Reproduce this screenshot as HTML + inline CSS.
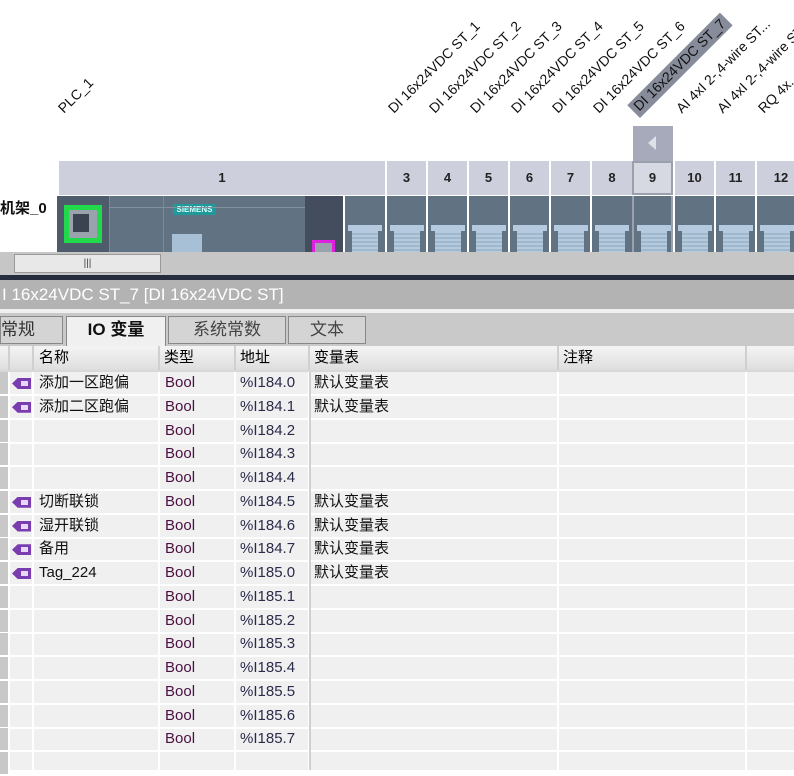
<!DOCTYPE html>
<html><head><meta charset="utf-8"><style>
*{margin:0;padding:0;box-sizing:border-box}
body{width:794px;height:770px;overflow:hidden;background:#fff;font-family:"Liberation Sans","Noto Sans CJK SC",sans-serif;position:relative}
.a{position:absolute}
.lbl{position:absolute;font-size:14px;color:#111;transform-origin:0 100%;transform:rotate(-45deg);white-space:nowrap;line-height:16px}
.hd{position:absolute;top:161px;height:34px;background:#cdd0dc;border-left:2px solid #fff;font-size:13px;font-weight:bold;text-align:center;line-height:34px;color:#222}
.mod{position:absolute;top:196px;height:56px;background:#617282;border-left:2px solid #fff}
.conn{position:absolute;left:7px;width:26px;top:33px;height:23px;background:repeating-linear-gradient(#9fb8cc 0 2px,#b5cade 2px 4px)}
.conn:before{content:"";position:absolute;left:-4px;top:-4px;width:34px;height:6px;background:#b5cade}
.row{position:absolute;left:0;width:794px;height:24px;font-size:15px;line-height:22px}
.c{position:absolute;top:0;height:100%;border-right:2px solid #fff}
.tag{position:absolute;left:2px;top:6px;width:19px;height:11px;background:#7a3db0;clip-path:polygon(0 50%,30% 0,100% 0,100% 100%,30% 100%);}
.tag:after{content:"";position:absolute;left:9px;top:3px;width:7px;height:5px;background:#e8d8f8}
</style></head><body>
<div class="lbl" style="left:66px;top:100px">PLC_1</div>
<div class="lbl" style="left:396px;top:100px">DI 16x24VDC ST_1</div>
<div class="lbl" style="left:437px;top:100px">DI 16x24VDC ST_2</div>
<div class="lbl" style="left:478px;top:100px">DI 16x24VDC ST_3</div>
<div class="lbl" style="left:519px;top:100px">DI 16x24VDC ST_4</div>
<div class="lbl" style="left:560px;top:100px">DI 16x24VDC ST_5</div>
<div class="lbl" style="left:601px;top:100px">DI 16x24VDC ST_6</div>
<div class="lbl" style="left:640px;top:100px;background:#878c9a;padding:0 4px;height:18px">DI 16x24VDC ST_7</div>
<div class="lbl" style="left:684px;top:100px">AI 4xI 2-,4-wire ST...</div>
<div class="lbl" style="left:725px;top:100px">AI 4xI 2-,4-wire ST...</div>
<div class="lbl" style="left:766px;top:100px">RQ 4x...</div>
<div class="a" style="left:633px;top:126px;width:40px;height:35px;background:#a6aabb"></div>
<div class="a" style="left:648px;top:136px;width:0;height:0;border-top:7px solid transparent;border-bottom:7px solid transparent;border-right:8px solid #dfe1e8"></div>
<div class="a" style="left:0;top:197px;font-size:15px;font-weight:bold;color:#111">机架_0</div>
<div class="hd" style="left:57px;width:328px">1</div>
<div class="hd" style="left:385px;width:41px">3</div>
<div class="hd" style="left:426px;width:41px">4</div>
<div class="hd" style="left:467px;width:41px">5</div>
<div class="hd" style="left:508px;width:41px">6</div>
<div class="hd" style="left:549px;width:41px">7</div>
<div class="hd" style="left:590px;width:42px">8</div>
<div class="hd" style="left:632px;width:41px;border:2px solid #9aa0ae;background:#d6d8e2;line-height:30px">9</div>
<div class="hd" style="left:673px;width:41px">10</div>
<div class="hd" style="left:714px;width:41px">11</div>
<div class="hd" style="left:755px;width:50px">12</div>
<div class="a" style="left:57px;top:196px;width:52px;height:56px;background:#4e5b6b"></div>
<div class="a" style="left:64px;top:205px;width:38px;height:38px;background:#21d94a"></div>
<div class="a" style="left:69px;top:210px;width:28px;height:28px;background:#9aa2ae"></div>
<div class="a" style="left:73px;top:214px;width:16px;height:18px;background:#3b4250"></div>
<div class="mod" style="left:109px;width:54px;border-left:1px solid #7a8898"></div>
<div class="mod" style="left:163px;width:142px;border-left:1px solid #7a8898"><div class="a" style="left:9px;top:8px;width:43px;height:11px;background:#1e9a9a;color:#dff;font-size:8px;font-weight:bold;line-height:11px;text-align:center">SIEMENS</div><div class="a" style="left:8px;top:38px;width:30px;height:18px;background:#a8c0d6"></div></div>
<div class="a" style="left:109px;top:207px;width:196px;height:1px;background:#8190a0"></div>
<div class="a" style="left:305px;top:196px;width:38px;height:56px;background:#434d5d"></div>
<div class="a" style="left:312px;top:240px;width:23px;height:12px;background:#e020e0"></div>
<div class="a" style="left:315px;top:243px;width:17px;height:9px;background:#9aa2ae"></div>
<div class="mod" style="left:343px;width:42px"><div class="conn"></div></div>
<div class="mod" style="left:385px;width:41px"><div class="conn"></div></div>
<div class="mod" style="left:426px;width:41px"><div class="conn"></div></div>
<div class="mod" style="left:467px;width:41px"><div class="conn"></div></div>
<div class="mod" style="left:508px;width:41px"><div class="conn"></div></div>
<div class="mod" style="left:549px;width:41px"><div class="conn"></div></div>
<div class="mod" style="left:590px;width:42px"><div class="conn"></div></div>
<div class="mod" style="left:632px;width:41px;border-left:2px solid #9aa0ae;border-right:2px solid #9aa0ae"><div class="conn"></div></div>
<div class="mod" style="left:673px;width:41px"><div class="conn"></div></div>
<div class="mod" style="left:714px;width:41px"><div class="conn"></div></div>
<div class="mod" style="left:755px;width:50px"><div class="conn"></div></div>
<div class="a" style="left:0;top:252px;width:794px;height:23px;background:#c6c6c6"></div>
<div class="a" style="left:14px;top:254px;width:147px;height:19px;background:#e8e8e8;border:1px solid #999;font-size:10px;text-align:center;line-height:17px;color:#444">|||</div>
<div class="a" style="left:0;top:275px;width:794px;height:5px;background:#262d3c"></div>
<div class="a" style="left:0;top:280px;width:794px;height:29px;background:#b3b3b3;color:#fff;font-size:17px;line-height:29px;padding-left:2px">I 16x24VDC ST_7 [DI 16x24VDC ST]</div>
<div class="a" style="left:0;top:309px;width:794px;height:4px;background:#f0f0f0"></div>
<div class="a" style="left:0;top:313px;width:794px;height:33px;background:#c9c9c9"></div>
<div class="a" style="left:0;top:316px;width:63px;height:28px;background:#d4d4d4;border:1px solid #888;font-size:17px;line-height:26px;color:#333">常规</div>
<div class="a" style="left:66px;top:316px;width:100px;height:30px;background:#f0f0f0;border:1px solid #888;border-bottom:none;font-size:17px;font-weight:bold;line-height:26px;text-align:center;color:#111">IO 变量</div>
<div class="a" style="left:168px;top:316px;width:118px;height:28px;background:#d4d4d4;border:1px solid #888;font-size:17px;line-height:26px;text-align:center;color:#444">系统常数</div>
<div class="a" style="left:288px;top:316px;width:78px;height:28px;background:#d4d4d4;border:1px solid #888;font-size:17px;line-height:26px;text-align:center;color:#444">文本</div>
<div class="a" style="left:0;top:346px;width:794px;height:424px;background:#f0f0f0"></div>
<div class="row" style="top:346px;height:26px;background:linear-gradient(#f4f4f4,#dedede);line-height:24px;font-size:15px;border-bottom:2px solid #d8d8d8">
<div class="c" style="left:0;width:10px;border-right:2px solid #d0d0d0"></div><div class="c" style="left:10px;width:24px;border-right:2px solid #d0d0d0"></div>
<div class="c" style="left:34px;width:126px;padding-left:5px;border-right:2px solid #d0d0d0">名称</div>
<div class="c" style="left:160px;width:76px;padding-left:4px;border-right:2px solid #d0d0d0">类型</div>
<div class="c" style="left:236px;width:74px;padding-left:4px;border-right:2px solid #d0d0d0">地址</div>
<div class="c" style="left:310px;width:249px;padding-left:4px;border-right:2px solid #d0d0d0">变量表</div>
<div class="c" style="left:559px;width:188px;padding-left:4px;border-right:2px solid #d0d0d0">注释</div></div>
<div id="rows"></div>
<div class="a" style="left:309px;top:372px;width:2px;height:398px;background:#d0d0d0"></div>
<script>
var d=[["添加一区跑偏","%I184.0",1],["添加二区跑偏","%I184.1",1],["","%I184.2",0],["","%I184.3",0],["","%I184.4",0],["切断联锁","%I184.5",1],["湿开联锁","%I184.6",1],["备用","%I184.7",1],["Tag_224","%I185.0",1],["","%I185.1",0],["","%I185.2",0],["","%I185.3",0],["","%I185.4",0],["","%I185.5",0],["","%I185.6",0],["","%I185.7",0],["","",0]];
var h="";for(var i=0;i<d.length;i++){var r=d[i];var t=372+i*23.75;
h+='<div class="row" style="top:'+t+'px;border-bottom:2px solid #fff"><div class="c" style="left:0;width:10px;background:#c8c8c8"></div><div class="c" style="left:10px;width:24px">'+(r[2]?'<div class="tag"></div>':'')+'</div><div class="c" style="left:34px;width:126px;padding-left:5px;color:#111">'+r[0]+'</div><div class="c" style="left:160px;width:76px;padding-left:5px;color:#4a1040">'+(r[1]?'Bool':'')+'</div><div class="c" style="left:236px;width:74px;padding-left:4px;color:#2a2a4a">'+r[1]+'</div><div class="c" style="left:310px;width:249px;padding-left:4px;color:#111">'+(r[2]?'默认变量表':'')+'</div><div class="c" style="left:559px;width:188px"></div></div>';}
document.getElementById("rows").innerHTML=h;
</script>
</body></html>
